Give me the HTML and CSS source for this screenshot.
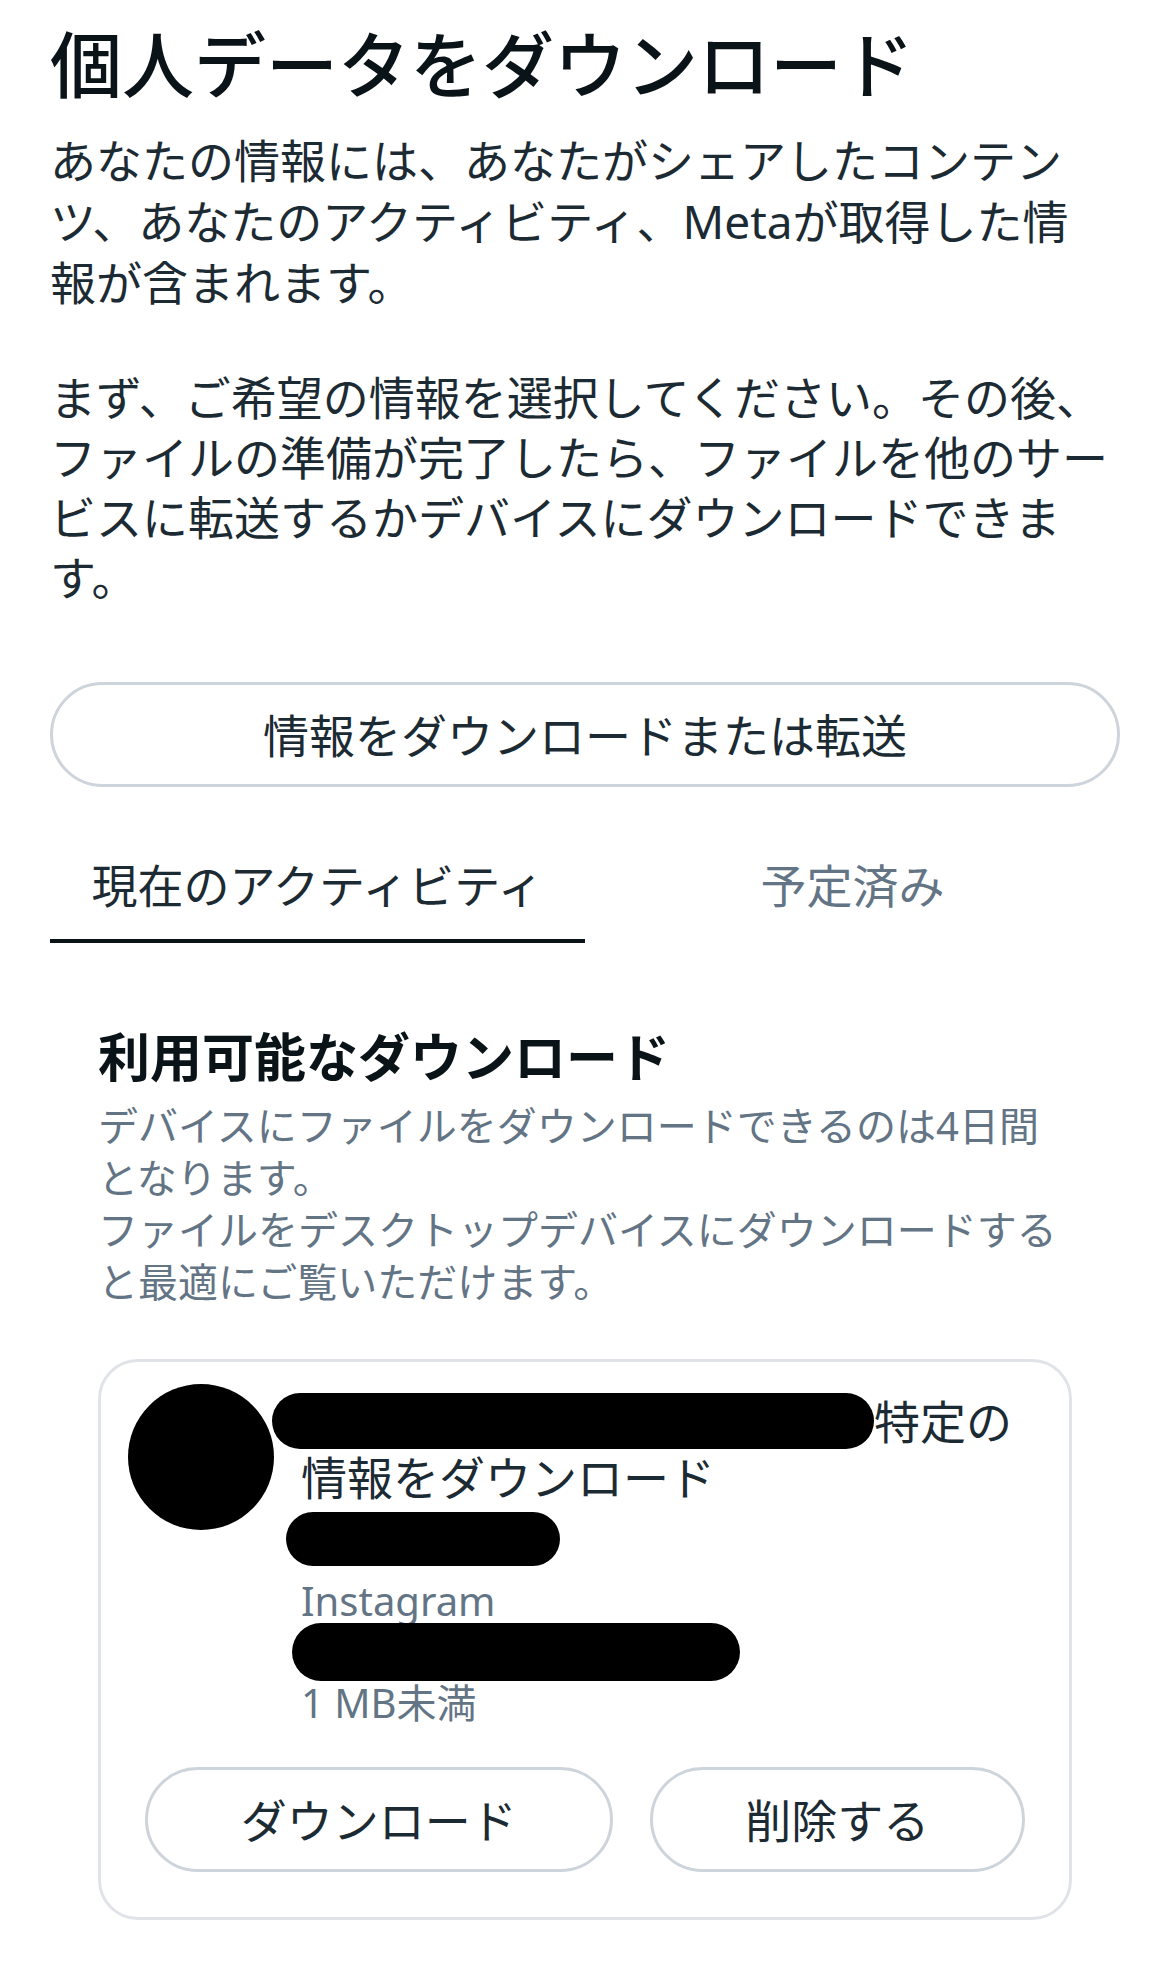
FILE: index.html
```html
<!DOCTYPE html>
<html lang="ja">
<head>
<meta charset="utf-8">
<title>個人データをダウンロード</title>
<link rel="stylesheet" href="styles.css">
</head>
<body>
<main class="page">
  <h1 class="title">個人データをダウンロード</h1>
  <div class="intro">
    <p>あなたの情報には、あなたがシェアしたコンテンツ、あなたのアクティビティ、Metaが取得した情報が含まれます。</p>
    <p>まず、ご希望の情報を選択してください。その後、ファイルの準備が完了したら、ファイルを他のサービスに転送するかデバイスにダウンロードできます。</p>
  </div>
  <button class="pill pill-wide" type="button">情報をダウンロードまたは転送</button>

  <nav class="tabs">
    <div class="tab tab-active">現在のアクティビティ</div>
    <div class="tab">予定済み</div>
  </nav>

  <section class="downloads">
    <h2 class="section-title">利用可能なダウンロード</h2>
    <p class="section-desc">デバイスにファイルをダウンロードできるのは4日間となります。<br>ファイルをデスクトップデバイスにダウンロードすると最適にご覧いただけます。</p>

    <article class="card">
      <div class="card-head">
        <div class="avatar"></div>
        <div class="card-info">
          <div class="card-title"><span class="redact redact-name"></span>特定の情報をダウンロード</div>
          <div class="redact redact-date"></div>
          <div class="meta">Instagram</div>
          <div class="redact redact-account"></div>
          <div class="meta meta-size">1 MB未満</div>
        </div>
      </div>
      <div class="card-actions">
        <button class="pill pill-action" type="button">ダウンロード</button>
        <button class="pill pill-action" type="button">削除する</button>
      </div>
    </article>
  </section>
</main>
</body>
</html>
```

FILE: styles.css
```css
* { box-sizing: border-box; }

html, body {
  margin: 0;
  padding: 0;
  background: #ffffff;
}

body {
  font-family: "Noto Sans", "Noto Sans CJK JP", sans-serif;
  color: #1c2b33;
}

.page {
  width: 1170px;
  padding: 17px 50px 48px 50px;
  display: flex;
  flex-direction: column;
}

.title {
  margin: 0;
  font-family: "Noto Sans CJK JP", "Noto Sans", sans-serif;
  font-size: 72px;
  line-height: 88px;
  font-weight: 500;
  color: #0a1317;
}

.intro {
  margin-top: 25px;
  padding-right: 8px;
  font-size: 46px;
  line-height: 60px;
  color: #1c2b33;
}

.intro p {
  margin: 0;
}

.intro p:first-child {
  line-height: 61px;
}

.intro p + p {
  margin-top: 54px;
}

.pill {
  font-family: inherit;
  background: #ffffff;
  color: #1c2b33;
  border: 3px solid #ced4db;
  border-radius: 60px;
  height: 105px;
  font-size: 46px;
  line-height: 60px;
  padding: 0 24px;
  display: flex;
  align-items: center;
  justify-content: center;
}

.pill-wide {
  margin-top: 75px;
  width: 100%;
}

.tabs {
  margin-top: 48px;
  display: grid;
  grid-template-columns: 1fr 1fr;
}

.tab {
  text-align: center;
  font-size: 46px;
  line-height: 60px;
  padding: 20px 0 24px;
  border-bottom: 4px solid transparent;
  color: #637485;
}

.tab-active {
  color: #1c2b33;
  border-bottom-color: #0a1317;
}

.downloads {
  padding: 0 48px;
  margin-top: 78px;
}

.section-title {
  margin: 0;
  font-family: "Noto Sans CJK JP", "Noto Sans", sans-serif;
  font-size: 52px;
  line-height: 68px;
  font-weight: 700;
  color: #0a1317;
}

.section-desc {
  margin: 11px 0 0;
  font-size: 40px;
  line-height: 52px;
  color: #637485;
}

.card {
  margin-top: 51px;
  border: 3px solid #e0e4e9;
  border-radius: 40px;
  padding: 22px 27px 45px 27px;
}

.card-head {
  display: flex;
  align-items: flex-start;
  gap: 27px;
}

.avatar {
  flex: 0 0 146px;
  width: 146px;
  height: 146px;
  border-radius: 50%;
  background: #000000;
}

.card-info {
  flex: 1;
  min-width: 0;
  padding-top: 9px;
  display: flex;
  flex-direction: column;
  align-items: flex-start;
}

.card-title {
  font-size: 46px;
  line-height: 56px;
  color: #1c2b33;
}

.redact {
  background: #000000;
  border-radius: 30px;
}

.redact-name {
  display: inline-block;
  vertical-align: top;
  width: 602px;
  height: 56px;
  margin-left: -29px;
}

.redact-date {
  width: 274px;
  height: 54px;
  margin-top: 7px;
  margin-left: -15px;
}

.redact-account {
  width: 448px;
  height: 58px;
  margin-top: -4px;
  margin-left: -9px;
}

.meta {
  font-size: 40px;
  line-height: 52px;
  color: #637485;
  margin-top: 9px;
}

.meta-size {
  margin-top: -4px;
}

.card-actions {
  margin: 38px 17px 0;
  display: flex;
  gap: 37px;
}

.pill-action {
  flex: 1 1 auto;
}
```
